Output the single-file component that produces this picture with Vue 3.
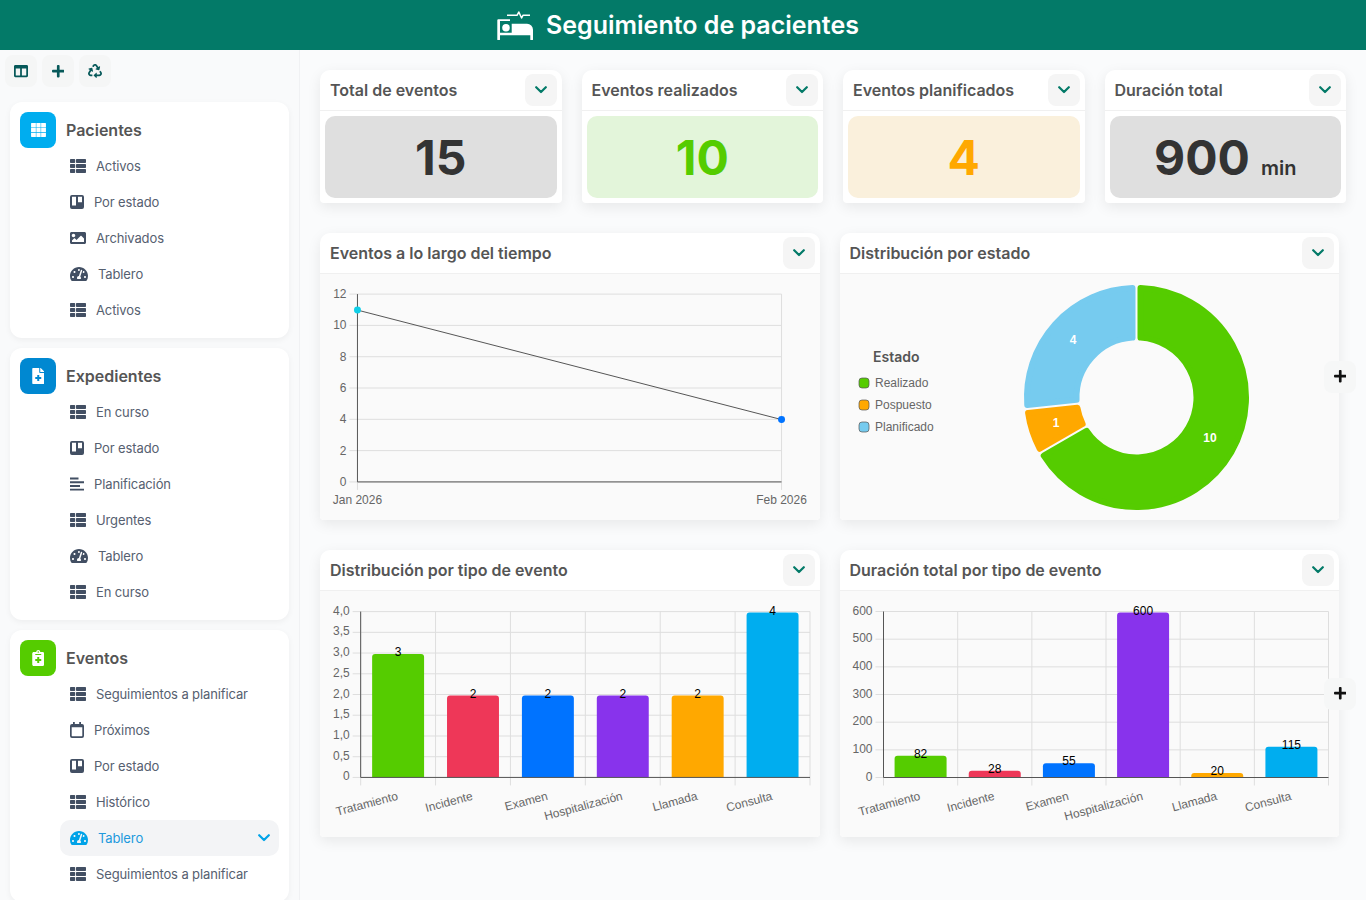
<template>
  <div class="page">
    <header class="topbar">
      <!-- bed with pulse line -->
      <svg class="topbar-icon" viewBox="0 0 36 29" width="36" height="29" fill="#fff">
        <path d="M1.2 8.3H13v1.7H3v18.3a1.35 1.35 0 0 1-2.7 0V9.2c0-.5.4-.9.9-.9z" />
        <circle cx="9" cy="16.7" r="3.8" />
        <path d="M14.7 12.7H30a6 6 0 0 1 6 6v9.6a1.35 1.35 0 0 1-2.7 0v-4H3v-2.6h11.7z" />
        <path d="M10 4.2h10.2l1.6-3.2 2.8 6 1.5-2.8H33" fill="none" stroke="#fff" stroke-width="1.5" stroke-linejoin="round" />
      </svg>
      <h1>Seguimiento de pacientes</h1>
    </header>

    <div class="layout">
      <aside class="sidebar">
        <div class="tools">
          <button v-for="t in tools" :key="t" class="tool">
            <svg :viewBox="icons[t].vb" :width="icons[t].w" :height="icons[t].h" fill="#07595a"><path :d="icons[t].d" /></svg>
          </button>
        </div>

        <section v-for="s in sections" :key="s.title" class="section">
          <div class="section-head">
            <span class="section-icon" :class="s.tone">
              <svg :viewBox="icons[s.icon].vb" :width="icons[s.icon].w" :height="icons[s.icon].h" fill="#fff"><path :d="icons[s.icon].d" fill-rule="evenodd" /></svg>
            </span>
            <span class="section-title">{{ s.title }}</span>
          </div>
          <a
            v-for="(item, i) in s.items"
            :key="i"
            class="nav-item"
            :class="{ active: item.active }"
          >
            <svg :viewBox="icons[item.icon].vb" :width="icons[item.icon].w" :height="icons[item.icon].h" fill="currentColor"><path :d="icons[item.icon].d" fill-rule="evenodd" /></svg>
            <span>{{ item.text }}</span>
            <svg v-if="item.active" class="nav-chevron" viewBox="0 0 12 8" width="12" height="8"><path d="M1.2 1.2 6 6l4.8-4.8" fill="none" stroke="currentColor" stroke-width="2.2" stroke-linecap="round" stroke-linejoin="round" /></svg>
          </a>
        </section>
      </aside>

      <main class="content">
        <div class="kpis">
          <div v-for="k in kpis" :key="k.title" class="card">
            <div class="card-head">
              <span>{{ k.title }}</span>
              <button class="drop">
                <svg viewBox="0 0 12 8" width="12" height="8"><path d="M1.2 1.2 6 6l4.8-4.8" fill="none" stroke="currentColor" stroke-width="2.2" stroke-linecap="round" stroke-linejoin="round" /></svg>
              </button>
            </div>
            <div class="kpi-body">
              <div class="kpi-box" :class="k.tone">
                <span class="kpi-value">{{ k.value }}</span>
                <span v-if="k.unit" class="kpi-unit">{{ k.unit }}</span>
              </div>
            </div>
          </div>
        </div>

        <div class="chart-row">
          <div class="card">
            <div class="card-head">
              <span>Eventos a lo largo del tiempo</span>
              <button class="drop"><svg viewBox="0 0 12 8" width="12" height="8"><path d="M1.2 1.2 6 6l4.8-4.8" fill="none" stroke="currentColor" stroke-width="2.2" stroke-linecap="round" stroke-linejoin="round" /></svg></button>
            </div>
            <svg class="chart" viewBox="320 274 500 246">
              <g v-for="n in 7" :key="n">
                <line x1="349.5" x2="782" :y1="482 - (n - 1) * 31.33" :y2="482 - (n - 1) * 31.33" class="grid" />
                <text x="346.5" :y="486 - (n - 1) * 31.33" text-anchor="end" class="tick">{{ (n - 1) * 2 }}</text>
              </g>
              <line x1="782" x2="782" y1="294" y2="490" class="grid" />
              <line x1="357.5" x2="357.5" y1="482" y2="490" class="grid" />
              <line x1="357.5" x2="357.5" y1="294" y2="482" class="axis" />
              <line x1="357.5" x2="782" y1="482" y2="482" class="axis" />
              <line x1="357.5" y1="310" x2="782" y2="419.6" stroke="#555" stroke-width="1" />
              <circle cx="357.5" cy="310" r="3.5" fill="#10cfe8" />
              <circle cx="782" cy="419.6" r="3.5" fill="#0073ff" />
              <text x="357.5" y="504" text-anchor="middle" class="tick">Jan 2026</text>
              <text x="782" y="504" text-anchor="middle" class="tick">Feb 2026</text>
            </svg>
          </div>

          <div class="card">
            <div class="card-head">
              <span>Distribución por estado</span>
              <button class="drop"><svg viewBox="0 0 12 8" width="12" height="8"><path d="M1.2 1.2 6 6l4.8-4.8" fill="none" stroke="currentColor" stroke-width="2.2" stroke-linecap="round" stroke-linejoin="round" /></svg></button>
            </div>
            <svg class="chart" viewBox="840 274 499.5 246">
              <text x="873" y="362" class="legend-title">Estado</text>
              <g v-for="(l, i) in donut" :key="l.name">
                <rect x="859" :y="378 + i * 22" width="10" height="10" rx="3" :fill="l.color" stroke="#555" stroke-opacity=".7" />
                <text x="875" :y="387 + i * 22" class="tick">{{ l.name }}</text>
                <path :d="l.path" :fill="l.color" :stroke="l.color" stroke-width="6" stroke-linejoin="round" />
                <text :x="l.lx" :y="l.ly" text-anchor="middle" class="donut-label">{{ l.value }}</text>
              </g>
            </svg>
          </div>
          <button class="side-add"><svg :viewBox="icons.plus.vb" width="12.5" height="14.3" fill="#111"><path :d="icons.plus.d" /></svg></button>
        </div>

        <div class="chart-row">
          <div v-for="c in barCharts" :key="c.title" class="card">
            <div class="card-head">
              <span>{{ c.title }}</span>
              <button class="drop"><svg viewBox="0 0 12 8" width="12" height="8"><path d="M1.2 1.2 6 6l4.8-4.8" fill="none" stroke="currentColor" stroke-width="2.2" stroke-linecap="round" stroke-linejoin="round" /></svg></button>
            </div>
            <svg class="chart" :viewBox="c.viewBox">
              <g v-for="t in c.ticks" :key="t.label">
                <line :x1="c.left - 8" :x2="c.right" :y1="t.y" :y2="t.y" class="grid" />
                <text :x="c.left - 11" :y="t.y + 3" text-anchor="end" class="tick">{{ t.label }}</text>
              </g>
              <line v-for="x in c.cols" :key="x" :x1="x" :x2="x" :y1="c.top" :y2="c.bottom + 8" class="grid" />
              <line :x1="c.left" :x2="c.left" :y1="c.top" :y2="c.bottom" class="axis" />
              <g v-for="b in c.bars" :key="b.name">
                <path :d="b.path" :fill="b.color" />
                <text :x="b.cx" :y="b.top + 3" text-anchor="middle" class="bar-label">{{ b.value }}</text>
                <text :transform="`translate(${b.cx + 0.5} 799.5) rotate(-15)`" text-anchor="end" class="tick">{{ b.name }}</text>
              </g>
              <line :x1="c.left" :x2="c.right" :y1="c.bottom" :y2="c.bottom" class="axis" />
            </svg>
          </div>
          <button class="side-add"><svg :viewBox="icons.plus.vb" width="12.5" height="14.3" fill="#111"><path :d="icons.plus.d" /></svg></button>
        </div>
      </main>
    </div>
  </div>
</template>

<script setup>
const icons = {
  columns: { vb: "0 0 512 512", w: 14, h: 14, d: "M464 32H48C21.49 32 0 53.49 0 80v352c0 26.51 21.49 48 48 48h416c26.51 0 48-21.49 48-48V80c0-26.51-21.49-48-48-48zM224 416H64V160h160v256zm224 0H288V160h160v256z" },
  plus: { vb: "0 0 448 512", w: 12.5, h: 14.3, d: "M416 208H272V64c0-17.67-14.33-32-32-32h-32c-17.67 0-32 14.33-32 32v144H32c-17.67 0-32 14.33-32 32v32c0 17.67 14.33 32 32 32h144v144c0 17.67 14.33 32 32 32h32c17.67 0 32-14.33 32-32V304h144c17.67 0 32-14.33 32-32v-32c0-17.67-14.33-32-32-32z" },
  recycle: { vb: "0 0 512 512", w: 14, h: 14, d: "M184.561 261.903c3.232 13.997-12.123 24.635-24.068 17.168l-40.736-25.455-50.867 81.402C55.606 356.273 70.96 384 96.012 384H148c6.627 0 12 5.373 12 12v40c0 6.627-5.373 12-12 12H96.115c-75.334 0-121.302-83.048-81.408-146.88l50.822-81.388-40.725-25.448c-12.081-7.547-8.966-25.961 4.879-29.158l110.237-25.45c8.611-1.988 17.201 3.381 19.189 11.99l25.452 110.237zm98.561-182.915l41.289 66.076-40.74 25.457c-12.051 7.528-9 25.953 4.879 29.158l110.237 25.45c8.672 1.999 17.215-3.438 19.189-11.99l25.45-110.237c3.197-13.844-11.99-24.719-24.068-17.168l-40.687 25.424-41.263-66.082c-37.521-60.033-125.209-60.171-162.816 0l-17.963 28.766c-3.51 5.62-1.8 13.021 3.82 16.533l33.919 21.195c5.62 3.512 13.024 1.803 16.536-3.817l17.961-28.743c12.712-20.341 41.973-19.676 54.257-.022zM497.288 301.12l-27.515-44.065c-3.511-5.623-10.916-7.334-16.538-3.821l-33.861 21.159c-5.62 3.512-7.33 10.915-3.818 16.536l27.564 44.112c13.257 21.211-2.057 48.96-27.136 48.96H320V336.02c0-14.213-17.242-21.383-27.313-11.313l-80 79.981c-6.249 6.248-6.249 16.379 0 22.627l80 79.989C302.689 517.308 320 510.3 320 495.989V448h95.88c75.274 0 121.335-82.997 81.408-146.88z" },
  grid: { vb: "0 0 512 512", w: 17, h: 17, d: "M48 32h128v128H32V48c0-9 7-16 16-16zM192 32h128v128H192zM336 32h128c9 0 16 7 16 16v112H336zM32 176h144v128H32zM192 176h128v128H192zM336 176h144v128H336zM32 320h144v128H48c-9 0-16-7-16-16zM192 320h128v128H192zM336 320h144v112c0 9-7 16-16 16H336z" },
  fileMedical: { vb: "0 0 384 512", w: 12.5, h: 16, d: "M377 105L279.1 7c-4.5-4.5-10.6-7-17-7H256v128h128v-6.1c0-6.3-2.5-12.4-7-16.9zm-153 31V0H24C10.7 0 0 10.7 0 24v464c0 13.3 10.7 24 24 24h336c13.3 0 24-10.7 24-24V160H248c-13.2 0-24-10.8-24-24zm64 160v48c0 4.4-3.6 8-8 8h-56v56c0 4.4-3.6 8-8 8h-48c-4.4 0-8-3.6-8-8v-56h-56c-4.4 0-8-3.6-8-8v-48c0-4.4 3.6-8 8-8h56v-56c0-4.4 3.6-8 8-8h48c4.4 0 8 3.6 8 8v56h56c4.4 0 8 3.6 8 8z" },
  notesMedical: { vb: "0 0 384 512", w: 12.5, h: 16, d: "M336 64h-80c0-35.3-28.7-64-64-64s-64 28.7-64 64H48C21.5 64 0 85.5 0 112v352c0 26.5 21.5 48 48 48h288c26.5 0 48-21.5 48-48V112c0-26.5-21.5-48-48-48zM192 40c13.3 0 24 10.7 24 24s-10.7 24-24 24-24-10.7-24-24 10.7-24 24-24zm96 304c0 4.4-3.6 8-8 8h-56v56c0 4.4-3.6 8-8 8h-48c-4.4 0-8-3.6-8-8v-56h-56c-4.4 0-8-3.6-8-8v-48c0-4.4 3.6-8 8-8h56v-56c0-4.4 3.6-8 8-8h48c4.4 0 8 3.6 8 8v56h56c4.4 0 8 3.6 8 8v48zm0-192c0 4.4-3.6 8-8 8H104c-4.4 0-8-3.6-8-8v-16c0-4.4 3.6-8 8-8h176c4.4 0 8 3.6 8 8v16z" },
  list: { vb: "0 0 16 14", w: 16, h: 14, d: "M.7 0h3.8c.4 0 .7.3.7.7v2.6c0 .4-.3.7-.7.7H.7C.3 4 0 3.7 0 3.3V.7C0 .3.3 0 .7 0zM6.7 0h8.6c.4 0 .7.3.7.7v2.6c0 .4-.3.7-.7.7H6.7c-.4 0-.7-.3-.7-.7V.7c0-.4.3-.7.7-.7zM.7 5h3.8c.4 0 .7.3.7.7v2.6c0 .4-.3.7-.7.7H.7C.3 9 0 8.7 0 8.3V5.7C0 5.3.3 5 .7 5zM6.7 5h8.6c.4 0 .7.3.7.7v2.6c0 .4-.3.7-.7.7H6.7c-.4 0-.7-.3-.7-.7V5.7c0-.4.3-.7.7-.7zM.7 10h3.8c.4 0 .7.3.7.7v2.6c0 .4-.3.7-.7.7H.7c-.4 0-.7-.3-.7-.7v-2.6c0-.4.3-.7.7-.7zM6.7 10h8.6c.4 0 .7.3.7.7v2.6c0 .4-.3.7-.7.7H6.7c-.4 0-.7-.3-.7-.7v-2.6c0-.4.3-.7.7-.7z" },
  trello: { vb: "0 0 14 14", w: 14, h: 14, d: "M2 0h10a2 2 0 0 1 2 2v10a2 2 0 0 1-2 2H2a2 2 0 0 1-2-2V2a2 2 0 0 1 2-2zM2 1.8v8.7h4V1.8zM8 1.8v5.4h4V1.8z" },
  image: { vb: "0 0 512 512", w: 16, h: 16, d: "M464 448H48c-26.51 0-48-21.49-48-48V112c0-26.51 21.49-48 48-48h416c26.51 0 48 21.49 48 48v288c0 26.51-21.49 48-48 48zM112 120c-30.928 0-56 25.072-56 56s25.072 56 56 56 56-25.072 56-56-25.072-56-56-56zM64 384h384V272l-87.515-87.515c-4.686-4.686-12.284-4.686-16.971 0L208 320l-55.515-55.515c-4.686-4.686-12.284-4.686-16.971 0L64 336v48z" },
  gauge: { vb: "0 0 576 512", w: 18, h: 16, d: "M288 32C128.94 32 0 160.94 0 320c0 52.8 14.25 102.26 39.06 144.8 5.61 9.62 16.3 15.2 27.44 15.2h443c11.14 0 21.83-5.58 27.44-15.2C561.75 422.26 576 372.8 576 320c0-159.06-128.94-288-288-288zm0 64c14.71 0 26.58 10.13 30.32 23.65-1.11 2.26-2.64 4.23-3.45 6.67l-9.22 27.67c-5.13 3.49-10.97 6.01-17.64 6.01-17.67 0-32-14.33-32-32S270.33 96 288 96zM96 384c-17.67 0-32-14.33-32-32s14.33-32 32-32 32 14.33 32 32-14.33 32-32 32zm48-160c-17.67 0-32-14.33-32-32s14.33-32 32-32 32 14.33 32 32-14.33 32-32 32zm246.77-72.41l-61.33 184C343.13 347.33 352 364.54 352 384c0 11.72-3.38 22.55-8.88 32H232.88c-5.5-9.45-8.88-20.28-8.88-32 0-33.94 26.5-61.43 59.9-63.59l61.34-184.01c4.17-12.56 17.73-19.45 30.36-15.17 12.57 4.19 19.35 17.79 15.17 30.36zm14.66 57.2l15.52-46.55c3.47-1.29 7.13-2.23 11.05-2.23 17.67 0 32 14.33 32 32s-14.33 32-32 32c-11.38-.01-20.89-6.28-26.57-15.22zM480 384c-17.67 0-32-14.33-32-32s14.33-32 32-32 32 14.33 32 32-14.33 32-32 32z" },
  stream: { vb: "0 0 14 14", w: 14, h: 14, d: "M0 .6h8.5v1.9H0zM0 4.3h14v1.9H0zM0 8h10v1.9H0zM0 11.7h14v1.9H0z" },
  calendar: { vb: "0 0 14 16", w: 14, h: 16, d: "M3 0h1.8v2h4.4V0H11v2h1a2 2 0 0 1 2 2v10a2 2 0 0 1-2 2H2a2 2 0 0 1-2-2V4a2 2 0 0 1 2-2h1zM1.7 5.2v8.6c0 .3.2.5.5.5h9.6c.3 0 .5-.2.5-.5V5.2z" },
};

const tools = ["columns", "plus", "recycle"];

const sections = [
  {
    title: "Pacientes",
    icon: "grid",
    tone: "sky",
    items: [
      { icon: "list", text: "Activos" },
      { icon: "trello", text: "Por estado" },
      { icon: "image", text: "Archivados" },
      { icon: "gauge", text: "Tablero" },
      { icon: "list", text: "Activos" },
    ],
  },
  {
    title: "Expedientes",
    icon: "fileMedical",
    tone: "blue",
    items: [
      { icon: "list", text: "En curso" },
      { icon: "trello", text: "Por estado" },
      { icon: "stream", text: "Planificación" },
      { icon: "list", text: "Urgentes" },
      { icon: "gauge", text: "Tablero" },
      { icon: "list", text: "En curso" },
    ],
  },
  {
    title: "Eventos",
    icon: "notesMedical",
    tone: "green",
    items: [
      { icon: "list", text: "Seguimientos a planificar" },
      { icon: "calendar", text: "Próximos" },
      { icon: "trello", text: "Por estado" },
      { icon: "list", text: "Histórico" },
      { icon: "gauge", text: "Tablero", active: true },
      { icon: "list", text: "Seguimientos a planificar" },
    ],
  },
];

const kpis = [
  { title: "Total de eventos", value: "15", tone: "gray" },
  { title: "Eventos realizados", value: "10", tone: "ok" },
  { title: "Eventos planificados", value: "4", tone: "warn" },
  { title: "Duración total", value: "900", unit: "min", tone: "gray" },
];

// donut: rounded sectors (inset + same colour stroke)
function sector(from, to) {
  const cx = 1136.5;
  const cy = 397.5;
  const ro = 109.5;
  const ri = 60;
  const pad = 4;
  const pt = (r, deg, off) => {
    const a = (deg * Math.PI) / 180 + off / r;
    return `${(cx + r * Math.sin(a)).toFixed(2)} ${(cy - r * Math.cos(a)).toFixed(2)}`;
  };
  const large = to - from > 180 ? 1 : 0;
  return `M${pt(ro, from, pad)}A${ro} ${ro} 0 ${large} 1 ${pt(ro, to, -pad)}L${pt(ri, to, -pad)}A${ri} ${ri} 0 ${large} 0 ${pt(ri, from, pad)}Z`;
}

const donut = [
  { name: "Realizado", value: 10, color: "#55cc00", path: sector(0, 240), lx: 1210, ly: 442 },
  { name: "Pospuesto", value: 1, color: "#ffa800", path: sector(240, 264), lx: 1056, ly: 427 },
  { name: "Planificado", value: 4, color: "#76cbef", path: sector(264, 360), lx: 1073, ly: 344 },
];

const names = ["Tratamiento", "Incidente", "Examen", "Hospitalización", "Llamada", "Consulta"];
const colors = ["#55cc00", "#ee3758", "#0073ff", "#8833ec", "#ffa800", "#00adef"];

function barPath(x, y, w, h) {
  const r = Math.min(3, h);
  return `M${x} ${y + h}V${y + r}Q${x} ${y} ${x + r} ${y}H${x + w - r}Q${x + w} ${y} ${x + w} ${y + r}V${y + h}Z`;
}

function buildBars(cfg) {
  const top = 611.5;
  const bottom = 777.5;
  const step = (cfg.right - cfg.left) / names.length;
  return {
    ...cfg,
    top,
    bottom,
    ticks: cfg.tickLabels.map((label, i) => ({
      label,
      y: bottom - (i * (bottom - top)) / (cfg.tickLabels.length - 1),
    })),
    cols: Array.from({ length: names.length + 1 }, (_, i) => cfg.left + i * step),
    bars: cfg.values.map((value, i) => {
      const h = (value / cfg.max) * (bottom - top);
      const w = 52;
      const cx = cfg.left + (i + 0.5) * step;
      return {
        name: names[i],
        value,
        cx,
        top: bottom - h,
        color: colors[i],
        path: barPath(cx - w / 2, bottom - h + 1, w, h - 1),
      };
    }),
  };
}

const barCharts = [
  buildBars({
    title: "Distribución por tipo de evento",
    viewBox: "320 591 500 246",
    left: 360.7,
    right: 810.5,
    max: 4,
    values: [3, 2, 2, 2, 2, 4],
    tickLabels: ["0", "0,5", "1,0", "1,5", "2,0", "2,5", "3,0", "3,5", "4,0"],
  }),
  buildBars({
    title: "Duración total por tipo de evento",
    viewBox: "840 591 499.5 246",
    left: 883.5,
    right: 1328.5,
    max: 600,
    values: [82, 28, 55, 600, 20, 115],
    tickLabels: ["0", "100", "200", "300", "400", "500", "600"],
  }),
];
</script>

<style>
html,
body {
  margin: 0;
  background: #fafbfc;
}
</style>

<style scoped>
.page {
  height: 900px;
  overflow: hidden;
  font-family: Inter, "Noto Sans", sans-serif;
  background: #fafbfc;
}

.topbar {
  height: 50px;
  background: #037a68;
  color: #fff;
  display: flex;
  align-items: center;
  justify-content: center;
  gap: 13px;
  padding-right: 10px;
}

.topbar h1 {
  margin: 0;
  font-size: 25px;
  font-weight: 600;
}

.layout {
  display: flex;
  height: 850px;
}

.sidebar {
  width: 300px;
  flex: none;
  box-sizing: border-box;
  padding: 5px 10px 0;
  background: #f9fafb;
  border-right: 1px solid #f0f1f3;
  overflow: hidden;
}

.tools {
  display: flex;
  gap: 5px;
  margin: 0 0 15px -5px;
}

.tool {
  width: 32px;
  height: 32px;
  padding: 0;
  border: 0;
  border-radius: 8px;
  background: #f5f6f6;
  display: flex;
  align-items: center;
  justify-content: center;
}

.section {
  background: #fff;
  border-radius: 12px;
  box-shadow: 0 2px 6px rgba(0, 0, 0, 0.05);
  padding: 10px;
  margin-bottom: 10px;
}

.section-head {
  display: flex;
  align-items: center;
  gap: 10px;
  height: 36px;
}

.section-icon {
  width: 36px;
  height: 36px;
  border-radius: 8px;
  display: flex;
  align-items: center;
  justify-content: center;
}

.sky {
  background: #00adef;
}

.blue {
  background: #0088d1;
}

.green {
  background: #55cc00;
}

.section-title {
  font-size: 16px;
  font-weight: 600;
  color: #555;
}

.nav-item {
  height: 36px;
  margin-left: 40px;
  padding: 0 10px;
  border-radius: 10px;
  display: flex;
  align-items: center;
  gap: 10px;
  font-size: 13px;
  letter-spacing: -0.12px;
  color: #566070;
}

.nav-item svg {
  color: #424f63;
}

.nav-item.active {
  background: #f3f4f6;
  color: #2199dd;
}

.nav-item.active svg {
  color: #00a3e8;
}

.nav-chevron {
  margin-left: auto;
  margin-right: -1px;
}

.content {
  flex: 1;
  min-width: 0;
  padding: 20px;
  display: flex;
  flex-direction: column;
  gap: 30px;
}

.kpis {
  display: grid;
  grid-template-columns: repeat(4, 1fr);
  gap: 20px;
}

.card {
  background: #fff;
  border-radius: 10px 10px 4px 4px;
  box-shadow: 0 4px 14px rgba(0, 0, 0, 0.08);
  overflow: hidden;
}

.card-head {
  height: 41px;
  box-sizing: border-box;
  border-bottom: 1px solid #f0f0f0;
  display: flex;
  align-items: center;
  justify-content: space-between;
  padding: 0 5px 0 10px;
  font-size: 16px;
  font-weight: 600;
  color: #555;
}

.drop {
  width: 32px;
  height: 32px;
  padding: 0;
  border: 0;
  border-radius: 8px;
  background: #f5f5f5;
  color: #037a68;
  display: flex;
  align-items: center;
  justify-content: center;
}

.kpi-body {
  padding: 5px;
}

.kpi-box {
  height: 82px;
  border-radius: 10px;
  display: flex;
  align-items: baseline;
  justify-content: center;
  line-height: 84px;
}

.kpi-box.gray {
  background: #dfdfdf;
  color: #333;
}

.kpi-box.ok {
  background: #e3f5da;
  color: #55cc00;
}

.kpi-box.warn {
  background: #faf0dc;
  color: #ffa800;
}

.kpi-value {
  font-size: 48px;
  font-weight: 700;
}

.kpi-unit {
  margin-left: 11px;
  font-size: 20px;
  font-weight: 600;
}

.chart-row {
  position: relative;
  display: grid;
  grid-template-columns: 1fr 1fr;
  gap: 20px;
  margin-right: 7px;
}

.chart {
  display: block;
  width: 100%;
  height: 246px;
  background: #fafafa;
}

.grid {
  stroke: #dedede;
  stroke-width: 1;
}

.axis {
  stroke: #555;
  stroke-width: 1;
}

.tick {
  font-family: "Liberation Sans", Arial, sans-serif;
  font-size: 12px;
  fill: #666;
}

.bar-label {
  font-family: "Liberation Sans", Arial, sans-serif;
  font-size: 12px;
  fill: #000;
}

.legend-title {
  font-family: Inter, sans-serif;
  font-size: 14px;
  font-weight: 600;
  fill: #555;
}

.donut-label {
  font-family: "Liberation Sans", Arial, sans-serif;
  font-size: 12px;
  font-weight: 700;
  fill: #fff;
}

.side-add {
  position: absolute;
  right: -17px;
  top: 50%;
  transform: translateY(-50%);
  width: 32px;
  height: 32px;
  padding: 0;
  border: 0;
  border-radius: 8px;
  background: #f6f7f7;
  display: flex;
  align-items: center;
  justify-content: center;
}
</style>
